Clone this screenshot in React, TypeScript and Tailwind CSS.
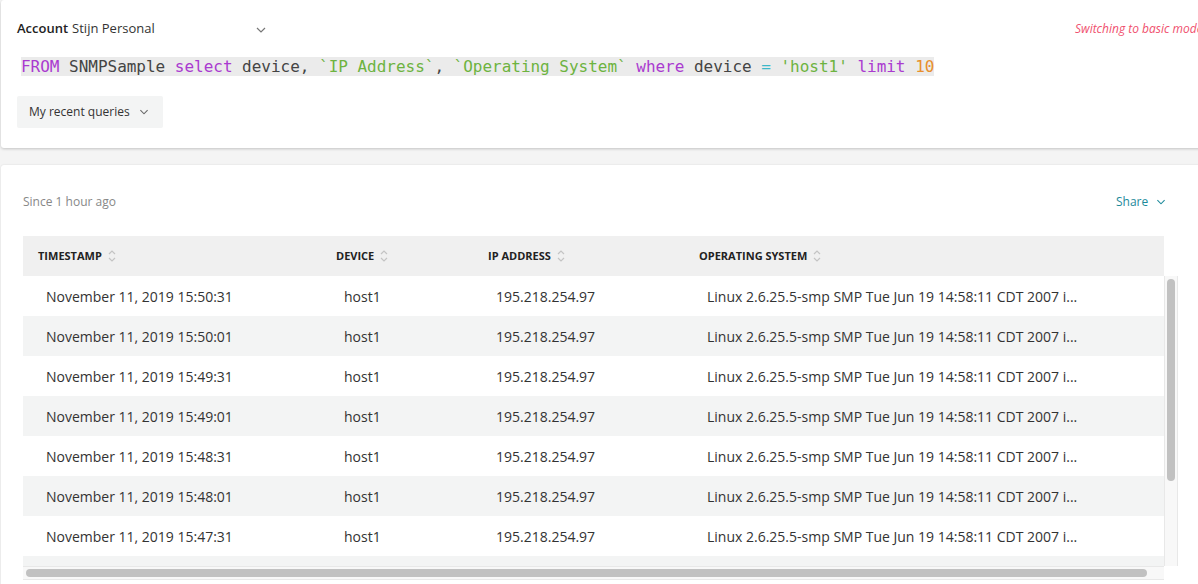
import React from "react";

const Chevron = ({ className = "" }: { className?: string }) => (
  <svg width="10" height="6" viewBox="0 0 10 6" className={className} fill="none" stroke="currentColor" strokeWidth="1.2">
    <path d="M1 1l4 4 4-4" />
  </svg>
);

const SortIcon = () => (
  <svg width="8" height="14" viewBox="0 0 8 14" fill="none" stroke="#c4c4c4" strokeWidth="1.2" className="ml-[6px]">
    <path d="M1 5l3-3 3 3" />
    <path d="M1 9l3 3 3-3" />
  </svg>
);

const rows = [
  "November 11, 2019 15:50:31",
  "November 11, 2019 15:50:01",
  "November 11, 2019 15:49:31",
  "November 11, 2019 15:49:01",
  "November 11, 2019 15:48:31",
  "November 11, 2019 15:48:01",
  "November 11, 2019 15:47:31",
];

export default function App() {
  return (
    <div className="w-[1198px] h-[584px] overflow-hidden bg-[#f4f4f4] text-[#333]" style={{ fontFamily: '"Open Sans", sans-serif' }}>
      {/* Top card */}
      <div className="ml-[1px] w-[1210px] h-[148px] bg-white shadow-[0_1px_3px_rgba(0,0,0,0.2)] rounded-[3px] relative">
        <div className="flex items-center h-[57px] pl-[16px] pt-[1px]">
          <span className="text-[13px] font-semibold text-[#222]">Account</span>
          <span className="text-[13px] ml-[4px] text-[#333] w-[184px]">Stijn Personal</span>
          <Chevron className="text-[#777] mt-[1px]" />
          <span className="text-[12px] italic text-[#f0506e] absolute left-[1074px] top-[20px] whitespace-nowrap">Switching to basic mode</span>
        </div>
        <div className="pl-[20px] flex">
          <div className="bg-[#ebebeb] h-[19px] leading-[19px] text-[16px] whitespace-pre tracking-[-0.02px]" style={{ fontFamily: '"DejaVu Sans Mono", monospace' }}>
            <span className="text-[#aa3ad0]">FROM</span>
            <span className="text-[#444]"> SNMPSample </span>
            <span className="text-[#aa3ad0]">select</span>
            <span className="text-[#444]"> device, </span>
            <span className="text-[#6db33f]">`IP Address`</span>
            <span className="text-[#444]">, </span>
            <span className="text-[#6db33f]">`Operating System`</span>
            <span className="text-[#444]"> </span>
            <span className="text-[#aa3ad0]">where</span>
            <span className="text-[#444]"> device </span>
            <span className="text-[#3cb8c8]">=</span>
            <span className="text-[#444]"> </span>
            <span className="text-[#6db33f]">'host1'</span>
            <span className="text-[#444]"> </span>
            <span className="text-[#aa3ad0]">limit</span>
            <span className="text-[#444]"> </span>
            <span className="text-[#e8902d]">10</span>
          </div>
        </div>
        <div className="pl-[16px] mt-[20px] flex">
          <div className="flex items-center h-[32px] w-[146px] bg-[#f3f4f4] rounded-[2px] pl-[12px] text-[12px] text-[#333]">
            My recent queries
            <Chevron className="ml-[9px] text-[#666] scale-90" />
          </div>
        </div>
      </div>

      {/* Second card */}
      <div className="mt-[17px] ml-[1px] w-[1210px] h-[440px] bg-white rounded-[3px] shadow-[0_0_2px_rgba(0,0,0,0.12)]">
        <div className="flex items-center h-[71px] pl-[22px] pt-[2px]">
          <span className="text-[12px] text-[#888]">Since 1 hour ago</span>
          <div className="flex items-center absolute left-[1116px] top-[193px]">
            <span className="text-[12px] text-[#1d8a9b]">Share</span>
            <Chevron className="ml-[8px] text-[#1d8a9b] scale-90" />
          </div>
        </div>
        <div className="ml-[22px] w-[1155px]">
          <div className="flex items-center h-[40px] bg-[#f0f0f0] w-[1141px] text-[11px] font-bold text-[#222] uppercase">
            <div className="w-[298px] pl-[15px] flex items-center">Timestamp<SortIcon /></div>
            <div className="w-[152px] pl-[15px] flex items-center">Device<SortIcon /></div>
            <div className="w-[211px] pl-[15px] flex items-center">IP Address<SortIcon /></div>
            <div className="flex-1 pl-[15px] flex items-center">Operating System<SortIcon /></div>
          </div>
          <div className="flex h-[290px] overflow-hidden">
            <div className="w-[1141px]">
              {rows.map((t, i) => (
                <div key={i} className={`flex items-center h-[40px] text-[14px] text-[#333] ${i % 2 === 1 ? "bg-[#f3f4f4]" : "bg-white"}`}>
                  <div className="w-[298px] pl-[23px]">{t}</div>
                  <div className="w-[152px] pl-[23px]">host1</div>
                  <div className="w-[211px] pl-[23px]">195.218.254.97</div>
                  <div className="flex-1 pl-[23px] whitespace-nowrap">Linux 2.6.25.5-smp SMP Tue Jun 19 14:58:11 CDT 2007 i...</div>
                </div>
              ))}
              <div className="h-[40px] bg-[#f3f4f4]" />
            </div>
            <div className="w-[14px] bg-[#f8f8f8] border-l border-r border-[#e8e8e8] pt-[3px] flex justify-center">
              <div className="w-[8px] h-[202px] rounded-full bg-[#c1c1c1]" />
            </div>
          </div>
          <div className="h-[14px] w-[1141px] bg-[#f8f8f8] border-t border-b border-[#e8e8e8] flex items-center pl-[3px]">
            <div className="h-[8px] w-[1121px] rounded-full bg-[#c1c1c1]" />
          </div>
        </div>
      </div>
    </div>
  );
}
